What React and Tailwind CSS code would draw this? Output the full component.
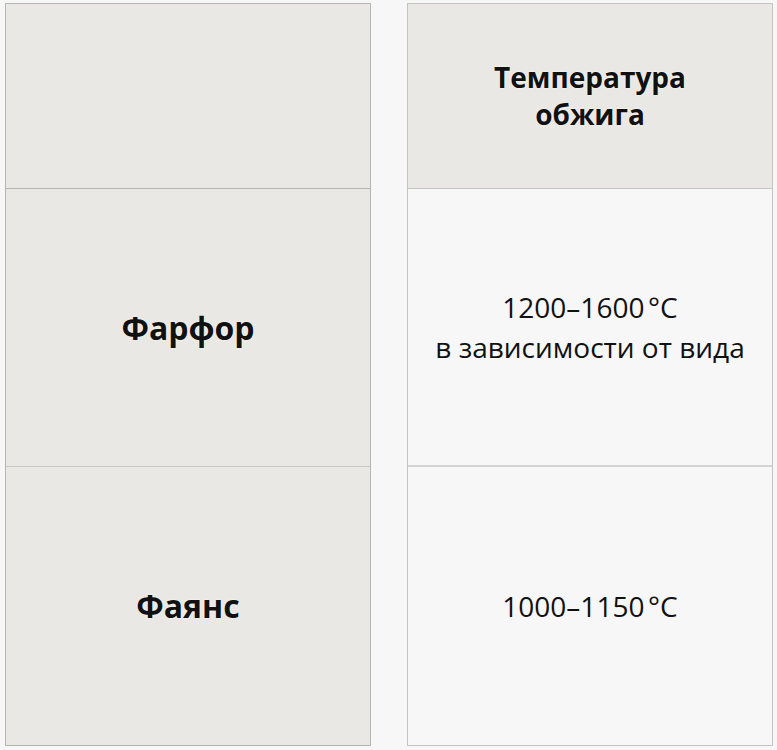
import React from 'react';

const rows = [
  { name: 'Фарфор', temp: ['1200–1600\u202F°C', 'в зависимости от вида'] },
  { name: 'Фаянс', temp: ['1000–1150\u202F°C'] },
];

export default function App() {
  return (
    <div
      className="min-h-[750px] bg-[#f7f7f7] pl-[5px] pr-[4px] pt-[3px] text-[#111]"
      style={{ fontFamily: '"Open Sans", "Noto Sans", sans-serif' }}
    >
      <div className="grid grid-cols-[366px_366px] gap-x-[36px]">
        {/* Left column: names */}
        <div className="border border-[#b5b5b0] bg-[#e9e8e4]">
          <div className="h-[185px] border-b border-[#b5b5b0]" />
          {rows.map((r, i) => (
            <div
              key={r.name}
              className={`flex items-center justify-center text-[32px] font-bold [text-shadow:0_0_2px_#fff] ${
                i === 0 ? 'h-[278px] border-b border-[#c8c8c4]' : 'h-[278px]'
              }`}
            >
              {r.name}
            </div>
          ))}
        </div>

        {/* Right column: temperatures */}
        <div className="border border-[#c4c4c4] bg-[#f7f7f7]">
          <div className="flex h-[185px] flex-col items-center justify-center border-b border-[#c4c4c4] bg-[#e9e8e4] text-[28px] font-bold leading-[37px] [text-shadow:0_0_2px_#fff]">
            <span>Температура</span>
            <span>обжига</span>
          </div>
          {rows.map((r, i) => (
            <div
              key={r.name}
              className={`flex flex-col items-center justify-center text-[28px] leading-[40px] ${
                i === 0 ? 'h-[278px] border-b-2 border-[#d4d4d4]' : 'h-[278px]'
              }`}
            >
              {r.temp.map((t) => (
                <span key={t}>{t}</span>
              ))}
            </div>
          ))}
        </div>
      </div>
    </div>
  );
}
